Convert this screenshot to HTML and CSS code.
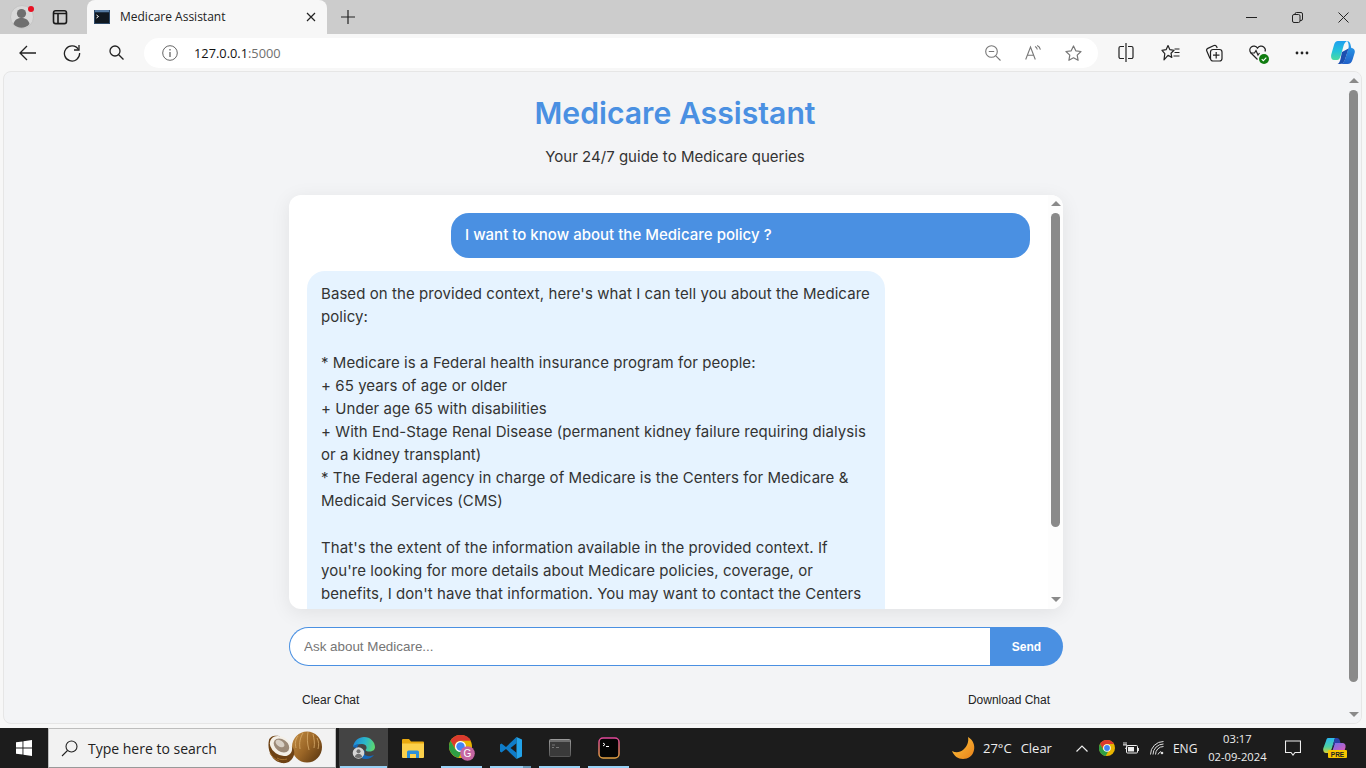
FILE: index.html
```html
<!DOCTYPE html>
<html lang="en">
<head>
  <meta charset="UTF-8" />
  <meta name="viewport" content="width=device-width, initial-scale=1.0"/>
  <title>Medicare Assistant</title>
  <link rel="stylesheet" href="styles.css">
</head>
<body>

  <!-- tab strip -->
  <div class="tabstrip">
    <div class="profile">
      <svg width="24" height="24" viewBox="0 0 24 24"><circle cx="12" cy="12" r="11.500" fill="#d9d9d9" stroke="#c4c4c4"/><circle cx="11.500" cy="8.500" r="4.600" fill="#6f6f6f"/><path d="M3.500 19c1-4.500 4.500-6 8-6s7 1.500 8 6c-2 2.500-5 3.800-8 3.800s-6-1.300-8-3.800z" fill="#6f6f6f"/></svg>
      <span class="profile-dot"></span>
    </div>
    <div class="strip-btn">
      <svg width="16" height="16" viewBox="0 0 16 16" fill="none" stroke="#1a1a1a" stroke-width="1.600"><rect x="1.500" y="1.800" width="13" height="12.800" rx="2.200"/><path d="M1.500 4.500h13M6 4.500v10"/></svg>
    </div>
    <div class="tab">
      <svg class="favicon" width="16" height="14" viewBox="0 0 16 14"><rect width="16" height="14" fill="#2f4a68"/><rect x="1" y="2.500" width="14" height="10.500" fill="#101820"/><path d="M2.500 5l2 1.500-2 1.500" fill="none" stroke="#fff" stroke-width="1"/><path d="M1 1h14" stroke="#7aa7d8"/></svg>
      <span class="tab-title">Medicare Assistant</span>
      <svg width="10" height="10" viewBox="0 0 10 10" stroke="#222" stroke-width="1.200"><path d="M1 1l8 8M9 1l-8 8"/></svg>
    </div>
    <div class="new-tab">
      <svg width="14" height="14" viewBox="0 0 14 14" stroke="#222" stroke-width="1.200"><path d="M7 0v14M0 7h14"/></svg>
    </div>
    <div class="win-controls">
      <div class="win-btn"><svg width="11" height="11" viewBox="0 0 11 11" stroke="#222"><path d="M0 5.500h11"/></svg></div>
      <div class="win-btn"><svg width="11" height="11" viewBox="0 0 11 11" fill="none" stroke="#222"><rect x=".5" y="2.500" width="7.500" height="8" rx="1.500"/><path d="M3 2.500V2A1.500 1.500 0 0 1 4.500.5h4.500A1.500 1.500 0 0 1 10.500 2v5a1.500 1.500 0 0 1-1.500 1.500H8"/></svg></div>
      <div class="win-btn"><svg width="11" height="11" viewBox="0 0 11 11" stroke="#222"><path d="M.5.5l10 10M10.500.5l-10 10"/></svg></div>
    </div>
  </div>

  <!-- toolbar -->
  <div class="toolbar">
    <div class="tool">
      <svg width="18" height="16" viewBox="0 0 18 16" fill="none" stroke="#222" stroke-width="1.300"><path d="M17 8H1M8 1L1 8l7 7"/></svg>
    </div>
    <div class="tool">
      <svg width="18" height="18" viewBox="0 0 18 18" fill="none" stroke="#222" stroke-width="1.300"><path d="M15.500 5.500A7.600 7.600 0 1 0 16.600 9"/><path d="M16 1v5h-5"/></svg>
    </div>
    <div class="tool">
      <svg width="15" height="15" viewBox="0 0 15 15" fill="none" stroke="#222" stroke-width="1.300"><circle cx="6" cy="6" r="5"/><path d="M9.700 9.700l4.800 4.800"/></svg>
    </div>
    <div class="address">
      <svg class="info" width="16" height="16" viewBox="0 0 16 16" fill="none" stroke="#666"><circle cx="8" cy="8" r="7.300"/><path d="M8 7v5" stroke-width="1.300"/><path d="M8 4v1.400" stroke-width="1.300"/></svg>
      <span class="url">127.0.0.1<span class="url-port">:5000</span></span>
      <div class="addr-icons">
        <div class="addr-icon">
          <svg width="16" height="16" viewBox="0 0 16 16" fill="none" stroke="#777" stroke-width="1.100"><circle cx="6.500" cy="6.500" r="5.800"/><path d="M3.800 6.500h5.400M10.800 10.800l4.700 4.700"/></svg>
        </div>
        <div class="addr-icon">
          <svg width="16" height="15" viewBox="0 0 16 15" fill="none" stroke="#777" stroke-width="1.100"><path d="M.7 14.500L5.500 2l4.800 12.500M2.300 10.300h6.400"/><path d="M10 1.500c1.300.5 2 1.500 2.300 3M12.200.5c1.700.8 2.800 2.300 3.200 4.200"/></svg>
        </div>
        <div class="addr-icon">
          <svg width="17" height="16" viewBox="0 0 17 16" fill="none" stroke="#777" stroke-width="1.200"><path d="M8.500 1l2.300 4.800 5.200.7-3.800 3.600.9 5.200-4.600-2.500-4.600 2.500.9-5.200L1 6.500l5.200-.7z" stroke-linejoin="round"/></svg>
        </div>
      </div>
    </div>
    <div class="tool tool-first">
      <svg width="16" height="19" viewBox="0 0 16 19" fill="none" stroke="#222" stroke-width="1.200"><path d="M6 3.500H2.500A1.500 1.500 0 0 0 1 5v9a1.500 1.500 0 0 0 1.500 1.500H6M10 3.500h3.500A1.500 1.500 0 0 1 15 5v9a1.500 1.500 0 0 1-1.500 1.500H10M8 0v19"/></svg>
    </div>
    <div class="tool">
      <svg width="19" height="17" viewBox="0 0 19 17" fill="none" stroke="#222" stroke-width="1.200"><path d="M7 1.500l1.900 4.200 4.100.6-3 2.900.8 4.200L7 11.300 3 15.800l.8-6.200L1 6.300l4.100-.6zM13.500 5H18.500M13.500 8.500H18.500M12.500 12H18.500" stroke-linejoin="round"/></svg>
    </div>
    <div class="tool">
      <svg width="18" height="18" viewBox="0 0 18 18" fill="none" stroke="#222" stroke-width="1.200"><path d="M5 14.500L1.800 7a2 2 0 0 1 1-2.600L9 1.500a2 2 0 0 1 2.600 1l.6 1.500"/><rect x="5.500" y="5.500" width="11.500" height="11.500" rx="2.500"/><path d="M11.200 8v6.500M8 11.200h6.500"/></svg>
    </div>
    <div class="tool tool-health">
      <svg width="18" height="16" viewBox="0 0 18 16" fill="none" stroke="#222" stroke-width="1.200"><path d="M8.500 14.500L2 8C.2 6 .5 3.200 2.300 1.900 4.200.5 7 1 8.500 3.200 10 1 12.800.5 14.700 1.900c1.500 1.100 2 3 1.300 4.600"/><path d="M1.500 8h4l1.500-2.500 2 4.500 1.500-2"/></svg>
      <svg class="health-check" width="10" height="10" viewBox="0 0 10 10"><circle cx="5" cy="5" r="5" fill="#107c10"/><path d="M2.700 5.200l1.600 1.500 3-3" fill="none" stroke="#fff" stroke-width="1.100"/></svg>
    </div>
    <div class="tool">
      <svg width="14" height="4" viewBox="0 0 14 4" fill="#222"><circle cx="2" cy="2" r="1.400"/><circle cx="7" cy="2" r="1.400"/><circle cx="12" cy="2" r="1.400"/></svg>
    </div>
    <div class="tool tool-copilot">
      <svg width="24" height="23" viewBox="0 0 24 23">
        <defs>
          <linearGradient id="cpA" x1="0" y1="0" x2="0" y2="1"><stop offset="0" stop-color="#1f9ff0"/><stop offset=".55" stop-color="#26c4d8"/><stop offset="1" stop-color="#4ddca0"/></linearGradient>
          <linearGradient id="cpB" x1="0" y1="0" x2="0" y2="1"><stop offset="0" stop-color="#28a8f0"/><stop offset="1" stop-color="#2160c8"/></linearGradient>
        </defs>
        <path d="M7 0h9c-2 1-3 3-3.500 5L10 14c-1 3-2 5-4 5H3C.5 19-.5 16 .4 13L3 4C3.700 1.500 5 0 7 0z" fill="url(#cpA)"/>
        <path d="M16 0c2 0 3 1.500 3.500 3.500l.8 3.500C22.500 7 24.500 9 23.600 12l-2 6.500c-.8 3-2.600 4.500-5.100 4.500H9c3 0 4.500-3 5.500-6l3-10C18 5 17.500 1.500 16 0z" fill="url(#cpB)"/>
        <path d="M11 11l6.500-3.500L14.500 17c-.8 3-2.500 6-5.500 6H6.500c3-1 3-6 4.500-12z" fill="#1b4fb0"/>
      </svg>
    </div>
  </div>

  <!-- page viewport -->
  <div class="viewport">
    <main class="page">
      <h1>Medicare Assistant</h1>
      <p class="subtitle">Your 24/7 guide to Medicare queries</p>

      <div class="container">
        <div class="chat-box">
          <div class="messages">
            <div class="msg msg-user">I want to know about the Medicare policy ?</div>
            <div class="msg msg-bot">Based on the provided context, here's what I can tell you about the Medicare
policy:

* Medicare is a Federal health insurance program for people:
+ 65 years of age or older
+ Under age 65 with disabilities
+ With End-Stage Renal Disease (permanent kidney failure requiring dialysis
or a kidney transplant)
* The Federal agency in charge of Medicare is the Centers for Medicare &amp;
Medicaid Services (CMS)

That's the extent of the information available in the provided context. If
you're looking for more details about Medicare policies, coverage, or
benefits, I don't have that information. You may want to contact the Centers
for Medicare &amp; Medicaid Services (CMS).</div>
          </div>
          <div class="scrollbar inner-scroll">
            <span class="arrow-up"></span>
            <div class="track"><span class="thumb inner-thumb"></span></div>
            <span class="arrow-down"></span>
          </div>
        </div>

        <div class="input-row">
          <input class="chat-input" type="text" placeholder="Ask about Medicare...">
          <button class="send-btn">Send</button>
        </div>

        <div class="actions">
          <button class="link-btn">Clear Chat</button>
          <button class="link-btn">Download Chat</button>
        </div>
      </div>
    </main>
    <div class="scrollbar page-scroll">
      <span class="arrow-up"></span>
      <div class="track"><span class="thumb page-thumb"></span></div>
      <span class="arrow-down"></span>
    </div>
  </div>

  <!-- windows taskbar -->
  <div class="taskbar">
    <div class="start">
      <svg width="16" height="16" viewBox="0 0 16 16" fill="#fff"><path d="M0 2.300L6.500 1.400v6.200H0zM7.400 1.300L16 0v7.600H7.400zM0 8.400h6.500v6.200L0 13.700zM7.400 8.400H16V16l-8.600-1.300z"/></svg>
    </div>
    <div class="search">
      <svg width="17" height="17" viewBox="0 0 17 17" fill="none" stroke="#222" stroke-width="1.100"><circle cx="10.500" cy="6.500" r="5.500"/><path d="M6.500 10.500L1 16"/></svg>
      <span class="search-text">Type here to search</span>
      <svg class="coconut" width="56" height="34" viewBox="0 0 56 34">
        <defs>
          <linearGradient id="nutG" x1="0" y1="0" x2="1" y2=".8"><stop offset="0" stop-color="#c48f45"/><stop offset=".55" stop-color="#9a6526"/><stop offset="1" stop-color="#5f3a12"/></linearGradient>
        </defs>
        <ellipse cx="40" cy="16" rx="15" ry="15.500" fill="url(#nutG)"/>
        <path d="M36 2c-3 5-4 10-3 16M41 1c-1 5-1 11 1 18M46 3c1 5 2 9 1 14M31 5c-3 4-3 8-2 12M50 7c2 4 2 7 1 11" fill="none" stroke="#d8ac6c" stroke-width=".8"/>
        <path d="M2 9C.5 15 2 24 8 29c5 4 12 4 15 1 5-4 5-10 3-13L12 5C8 4 3 5 2 9z" fill="#6e4214"/>
        <path d="M3 22c2 4 5 6 9 8M10 27c3 2 7 2 10 1" fill="none" stroke="#a8722e" stroke-width="1"/>
        <ellipse cx="14" cy="15" rx="12" ry="9" transform="rotate(35 14 15)" fill="#f4efe6"/>
        <ellipse cx="14.500" cy="14.500" rx="8.500" ry="6" transform="rotate(35 14.500 14.500)" fill="#9c8a78"/>
        <ellipse cx="13" cy="12.500" rx="5" ry="3" transform="rotate(35 13 12.500)" fill="#d8cfc4"/>
      </svg>
    </div>
    <div class="task-icons">
      <div class="task-icon task-active">
        <svg width="24" height="24" viewBox="0 0 24 24">
          <defs><linearGradient id="edgeG" x1="0" y1=".3" x2="1" y2=".5"><stop offset="0" stop-color="#1f86d8"/><stop offset=".55" stop-color="#2bb8c8"/><stop offset="1" stop-color="#5cd670"/></linearGradient></defs>
          <path d="M1 11C2 4.500 7 1 12 1c6.500 0 11 5 11 10 0 3-2.500 4.500-5.500 4.500-2 0-3.500-.5-4-1.500 2-1.500 1.500-6-3.500-6C6 8 3 9 1 11z" fill="url(#edgeG)"/>
          <path d="M1 11c1.500-2 4-3 6-2.500C5 10 4 14 6 18c1.500 3 4 5 8 5 3 0 6-1.500 8-4-3 1.500-7 1.500-9 0-1-1-1-3 0-4" fill="#1668b8"/>
          <circle cx="6.500" cy="17" r="5.800" fill="#d5d5d5"/><circle cx="6.500" cy="15.300" r="2" fill="#6f6f6f"/><path d="M2.800 21c.5-2.400 2-3.300 3.700-3.300s3.200.9 3.700 3.300c-2 1.200-5.400 1.200-7.400 0z" fill="#6f6f6f"/>
        </svg>
      </div>
      <div class="task-icon">
        <svg width="22" height="22" viewBox="0 0 22 22"><path d="M0 3a1 1 0 0 1 1-1h6l2 2.500h12a1 1 0 0 1 1 1V9H0z" fill="#e9a90f"/><path d="M0 6.500h22V20a1 1 0 0 1-1 1H1a1 1 0 0 1-1-1z" fill="#fbd04b"/><path d="M5 21v-6a1.500 1.500 0 0 1 1.500-1.500h9A1.500 1.500 0 0 1 17 15v6h-3v-4H8v4z" fill="#2b8fd8"/></svg>
      </div>
      <div class="task-icon task-open">
        <svg width="26" height="26" viewBox="0 0 26 26"><circle cx="11.500" cy="11.500" r="11.500" fill="#e8b400"/><path d="M11.500 0A11.500 11.500 0 0 0 1.500 5.800l5 8.700A5.800 5.800 0 0 1 11.500 5.800H22A11.500 11.500 0 0 0 11.500 0z" fill="#db3a2e"/><path d="M1.500 5.800a11.500 11.500 0 0 0 8 17L14.500 14 6.500 14.500z" fill="#2f9e44"/><circle cx="11.500" cy="11.500" r="5.500" fill="#fff"/><circle cx="11.500" cy="11.500" r="4.200" fill="#4285f4"/><circle cx="18.500" cy="18.500" r="7.300" fill="#c466a2"/><text x="18.500" y="22" class="badge-g">G</text></svg>
      </div>
      <div class="task-icon task-open task-split">
        <svg width="24" height="24" viewBox="0 0 24 24"><path d="M2.500 7.500L1 8.500v7l1.500 1L7 13l10.500 10v-6.200L11.500 12l6-4.800V1L7 11z" fill="#0f7cc8"/><path d="M17.500 1L23 3.500v17L17.500 23z" fill="#22a3ea"/></svg>
      </div>
      <div class="task-icon task-open">
        <svg width="22" height="18" viewBox="0 0 22 18"><defs><linearGradient id="cmdG" x1="0" y1="0" x2="0" y2="1"><stop offset="0" stop-color="#9a9a9a"/><stop offset="1" stop-color="#555"/></linearGradient></defs><rect x=".5" y=".5" width="21" height="17" rx="1" fill="#3a3a3a" stroke="url(#cmdG)"/><rect x="1" y="1" width="20" height="2" fill="#6e6e6e"/><path d="M3 6h3M3 8.500h2M7 8.500h3" stroke="#777"/></svg>
      </div>
      <div class="task-icon task-open">
        <svg width="22" height="22" viewBox="0 0 22 22"><defs><linearGradient id="termG" x1="0" y1="0" x2="0" y2="1"><stop offset="0" stop-color="#e0479a"/><stop offset="1" stop-color="#e0a040"/></linearGradient></defs><rect x="1" y="1" width="20" height="20" rx="4" fill="#050505" stroke="url(#termG)" stroke-width="1.500"/><path d="M5 6l2 1.500L5 9" fill="none" stroke="#fff"/><path d="M8 9.500h3" stroke="#fff"/></svg>
      </div>
    </div>

    <div class="tray">
      <svg class="moon" width="24" height="24" viewBox="0 0 24 24"><defs><linearGradient id="moonG" x1="0" y1="0" x2="1" y2="1"><stop offset="0" stop-color="#ffc83d"/><stop offset="1" stop-color="#e8801a"/></linearGradient></defs><path d="M17 1c5 3 7 8 6 13-1 6-6 9-11 9-5 0-9-3-11-8 4 2 8 1.500 11.500-1.500C16 10.500 18 6 17 1z" fill="url(#moonG)"/></svg>
      <span class="weather-temp">27°C</span>
      <span class="weather-text">Clear</span>
      <svg class="chevron" width="12" height="7" viewBox="0 0 12 7" fill="none" stroke="#eee" stroke-width="1.200"><path d="M.5 6.500L6 1l5.500 5.500"/></svg>
      <svg class="tray-chrome" width="16" height="16" viewBox="0 0 16 16"><circle cx="8" cy="8" r="8" fill="#e8b400"/><path d="M8 0a8 8 0 0 0-7 4l3.500 6A4 4 0 0 1 8 4h7a8 8 0 0 0-7-4z" fill="#db3a2e"/><path d="M1 4a8 8 0 0 0 5.600 11.900L10 10 4.500 10z" fill="#2f9e44"/><circle cx="8" cy="8" r="3.800" fill="#fff"/><circle cx="8" cy="8" r="2.900" fill="#4285f4"/></svg>
      <svg class="battery" width="16" height="12" viewBox="0 0 16 12" fill="none" stroke="#eee"><rect x="3.500" y="3.500" width="11" height="7.500" rx="1"/><rect x="5" y="5" width="6" height="4.500" fill="#eee" stroke="none"/><path d="M15.500 6v3M1 0v3M3 0v3M0 3h4v1.500a2 2 0 0 1-2 2" stroke-width=".9"/></svg>
      <svg class="wifi" width="14" height="14" viewBox="0 0 14 14" fill="none" stroke="#ddd"><path d="M.5 13.500a13 13 0 0 1 13-13M3 13.500A10.500 10.500 0 0 1 13.500 3M5.500 13.500a8 8 0 0 1 8-8M8 13.500a5.500 5.500 0 0 1 3-3"/><circle cx="12" cy="12" r="1.300" fill="#ddd" stroke="none"/></svg>
      <span class="lang">ENG</span>
      <div class="clock"><span>03:17</span><span>02-09-2024</span></div>
      <svg class="notif" width="16" height="16" viewBox="0 0 16 16" fill="none" stroke="#eee" stroke-width="1.100"><path d="M.5 1h15v11.500H10L8 15l-2-2.500H.5z"/></svg>
      <svg class="tray-copilot" width="24" height="20" viewBox="0 0 24 20">
        <defs>
          <linearGradient id="tcL" x1="0" y1="0" x2="0" y2="1"><stop offset="0" stop-color="#2bb8f0"/><stop offset=".6" stop-color="#4fd0a0"/><stop offset="1" stop-color="#d8d030"/></linearGradient>
          <linearGradient id="tcR" x1="0" y1="0" x2="1" y2="1"><stop offset="0" stop-color="#6a70f0"/><stop offset="1" stop-color="#e858b0"/></linearGradient>
        </defs>
        <path d="M5 0h7L9 10l-2 5H3C.5 15-.3 12 .4 10L3 3C3.500 1 4 0 5 0z" fill="url(#tcL)"/>
        <path d="M12 0h2c1.500 0 2.500 1 3 3l.5 2H12l-3 5z" fill="#2a3fa8"/>
        <path d="M12 5h8c2 .5 3 2 2.500 4.500L21 14H9z" fill="url(#tcR)"/>
        <rect x="5" y="12" width="19" height="8" rx="1" fill="#f7c600"/>
        <text x="14.500" y="18.500" class="badge-pre">PRE</text>
      </svg>
    </div>
  </div>

</body>
</html>
```

FILE: styles.css
```css
* {
  box-sizing: border-box;
}

html, body {
  margin: 0;
  height: 768px;
  overflow: hidden;
}

body {
  display: flex;
  flex-direction: column;
  width: 1366px;
  background: #f7f7f7;
  font-family: "Liberation Sans", Arial, sans-serif;
  color: #333;
}

svg {
  display: block;
  flex-shrink: 0;
}

/* tab strip */
.tabstrip {
  display: flex;
  align-items: flex-end;
  height: 34px;
  background: #cccccc;
}

.profile {
  position: relative;
  display: flex;
  align-items: center;
  justify-content: center;
  width: 44px;
  height: 34px;
}

.profile-dot {
  position: absolute;
  top: 6px;
  left: 28px;
  width: 6px;
  height: 6px;
  border-radius: 50%;
  background: #e81123;
}

.strip-btn {
  display: flex;
  align-items: center;
  justify-content: center;
  width: 32px;
  height: 34px;
}

.tab {
  display: flex;
  align-items: center;
  width: 240px;
  height: 34px;
  margin-left: 11px;
  padding: 0 11px 0 7px;
  background: #f7f7f7;
  border-radius: 8px 8px 0 0;
}

.tab-title {
  flex: 1;
  margin-left: 10px;
  padding-bottom: 1px;
  font-family: "Open Sans", sans-serif;
  font-size: 12px;
  color: #222;
}

.new-tab {
  display: flex;
  align-items: center;
  justify-content: center;
  width: 42px;
  height: 34px;
}

.win-controls {
  display: flex;
  margin-left: auto;
}

.win-btn {
  display: flex;
  align-items: center;
  justify-content: center;
  width: 46px;
  height: 34px;
}

/* toolbar */
.toolbar {
  display: flex;
  align-items: center;
  height: 37px;
  padding-left: 6px;
  background: #f7f7f7;
}

.tool {
  display: flex;
  align-items: center;
  justify-content: center;
  width: 44px;
  height: 34px;
}

.tool-first {
  margin-left: 6px;
}

.tool-health {
  position: relative;
}

.health-check {
  position: absolute;
  top: 18px;
  left: 23px;
}

.tool-copilot {
  width: 38px;
}

.address {
  display: flex;
  align-items: center;
  width: 954px;
  height: 30px;
  margin-left: 6px;
  padding-left: 18px;
  background: #fff;
  border-radius: 15px;
}

.url {
  margin-left: 16px;
  padding-top: 1px;
  font-family: "Open Sans", sans-serif;
  font-size: 12.800px;
  color: #111;
}

.url-port {
  color: #6f6f6f;
}

.addr-icons {
  display: flex;
  margin-left: auto;
  padding-right: 5px;
}

.addr-icon {
  display: flex;
  align-items: center;
  justify-content: center;
  width: 40px;
  height: 30px;
}

/* page area */
.viewport {
  display: flex;
  height: 653px;
  margin: 0 4px 0 3px;
  border: 1px solid #e6e6e6;
  border-radius: 8px;
  background: #f3f4f6;
  overflow: hidden;
}

.page {
  flex: 1;
  display: flex;
  flex-direction: column;
  align-items: center;
  padding-top: 20px;
}

h1 {
  margin: 0;
  font-family: "Inter", sans-serif;
  font-size: 30.200px;
  font-weight: 600;
  line-height: 42px;
  color: #4a90e2;
}

.subtitle {
  margin: 11px 0 0;
  font-family: "Inter", sans-serif;
  font-size: 15px;
  letter-spacing: 0.02px;
  line-height: 23px;
}

.container {
  width: 774px;
  margin-top: 27px;
  margin-left: 2px;
}

.chat-box {
  display: flex;
  height: 414px;
  background: #fff;
  border-radius: 12px;
  box-shadow: 0 4px 20px rgba(0, 0, 0, 0.08);
  overflow: hidden;
}

.messages {
  flex: 1;
  display: flex;
  flex-direction: column;
  padding: 18px 18px 0 18px;
  overflow: hidden;
}

.msg {
  flex-shrink: 0;
  width: 579px;
  padding: 11px 14px 10px;
  font-family: "Inter", sans-serif;
  font-size: 15px;
  line-height: 23.040px;
  border-radius: 18px;
  white-space: pre;
}

.msg-user {
  align-self: flex-end;
  height: 45px;
  padding-top: 10px;
  background: #4a90e2;
  color: #fff;
  font-weight: 500;
  letter-spacing: 0.02px;
}

.msg-bot {
  align-self: flex-start;
  width: 578px;
  margin-top: 13px;
  background: #e6f3ff;
  letter-spacing: 0.07px;
}

.scrollbar {
  display: flex;
  flex-direction: column;
  align-items: center;
  flex-shrink: 0;
  width: 15px;
}

.track {
  flex: 1;
  width: 9px;
}

.thumb {
  display: block;
  width: 9px;
  border-radius: 5px;
  background: #8a8a8a;
}

.arrow-up,
.arrow-down {
  width: 0;
  height: 0;
  margin: 6px 0 7px;
  border-left: 5px solid transparent;
  border-right: 5px solid transparent;
}

.arrow-up {
  border-bottom: 5px solid #8a8a8a;
}

.arrow-down {
  margin: 5px 0 6px;
  border-top: 5px solid #8a8a8a;
}

.inner-scroll {
  background: #fdfdfd;
}

.inner-scroll .arrow-down {
  margin-bottom: 7px;
}

.inner-thumb {
  height: 314px;
}

.page-scroll {
  background: #f3f4f6;
}

.page-thumb {
  height: 592px;
}

.input-row {
  display: flex;
  height: 39px;
  margin-top: 18px;
}

.chat-input {
  flex: 1;
  padding: 0 14px;
  font-family: "Liberation Sans", Arial, sans-serif;
  font-size: 13.400px;
  color: #333;
  background: #fff;
  border: 1px solid #4a90e2;
  border-right: none;
  border-radius: 20px 0 0 20px;
  outline: none;
}

.chat-input::placeholder {
  color: #757575;
}

.send-btn {
  width: 73px;
  font-family: "Liberation Sans", Arial, sans-serif;
  font-size: 12px;
  font-weight: 700;
  color: #fff;
  background: #4a90e2;
  border: none;
  border-radius: 0 20px 20px 0;
}

.actions {
  display: flex;
  justify-content: space-between;
  padding: 0 13px 0 13px;
  margin-top: 26px;
}

.link-btn {
  padding: 0;
  font-family: "Liberation Sans", Arial, sans-serif;
  font-size: 12px;
  line-height: 16px;
  color: #222;
  background: none;
  border: none;
}

/* taskbar */
.taskbar {
  display: flex;
  align-items: center;
  height: 40px;
  margin-top: 4px;
  background: #1c1c1c;
  color: #eee;
}

.start {
  display: flex;
  align-items: center;
  justify-content: center;
  width: 48px;
  height: 40px;
}

.search {
  display: flex;
  align-items: center;
  width: 288px;
  height: 40px;
  padding-left: 12px;
  background: #f2f2f2;
  border: 1px solid #bdbdbd;
  border-bottom-color: #999;
}

.search-text {
  margin-left: 10px;
  font-family: "Open Sans", sans-serif;
  font-size: 14px;
  color: #222;
}

.coconut {
  margin-left: auto;
  margin-right: 12px;
}

.task-icons {
  display: flex;
  margin-left: 3px;
}

.task-icon {
  position: relative;
  display: flex;
  align-items: center;
  justify-content: center;
  width: 49px;
  height: 40px;
}

.task-active {
  background: #444;
}

.task-active::after,
.task-open::after {
  content: "";
  position: absolute;
  left: 1px;
  right: 1px;
  bottom: 0;
  height: 2px;
  background: #99d1f5;
}

.task-open::after {
  left: 4px;
  right: 4px;
}

.task-split::after {
  background: linear-gradient(to right, #99d1f5 80%, #6a9ab8 80%);
}

.badge-g {
  font-family: "Liberation Sans", sans-serif;
  font-size: 10px;
  fill: #fff;
  text-anchor: middle;
}

.badge-pre {
  font-family: "Liberation Sans", sans-serif;
  font-size: 6.500px;
  font-weight: 700;
  fill: #222;
  text-anchor: middle;
}

.tray {
  flex: 1;
  display: flex;
  align-items: center;
  font-family: "Open Sans", sans-serif;
  font-size: 13px;
}

.moon {
  margin-left: 318px;
}

.weather-temp {
  margin-left: 8px;
}

.weather-text {
  margin-left: 9px;
}

.chevron {
  margin-left: 24px;
}

.tray-chrome {
  margin-left: 11px;
}

.battery {
  margin-left: 8px;
}

.wifi {
  margin-left: 11px;
}

.lang {
  margin-left: 9px;
  font-size: 12px;
}

.clock {
  display: flex;
  flex-direction: column;
  align-items: center;
  width: 62px;
  margin-left: 9px;
  font-size: 11.200px;
  line-height: 18px;
  white-space: nowrap;
}

.notif {
  margin-left: 17px;
}

.tray-copilot {
  margin-left: 22px;
}
```
